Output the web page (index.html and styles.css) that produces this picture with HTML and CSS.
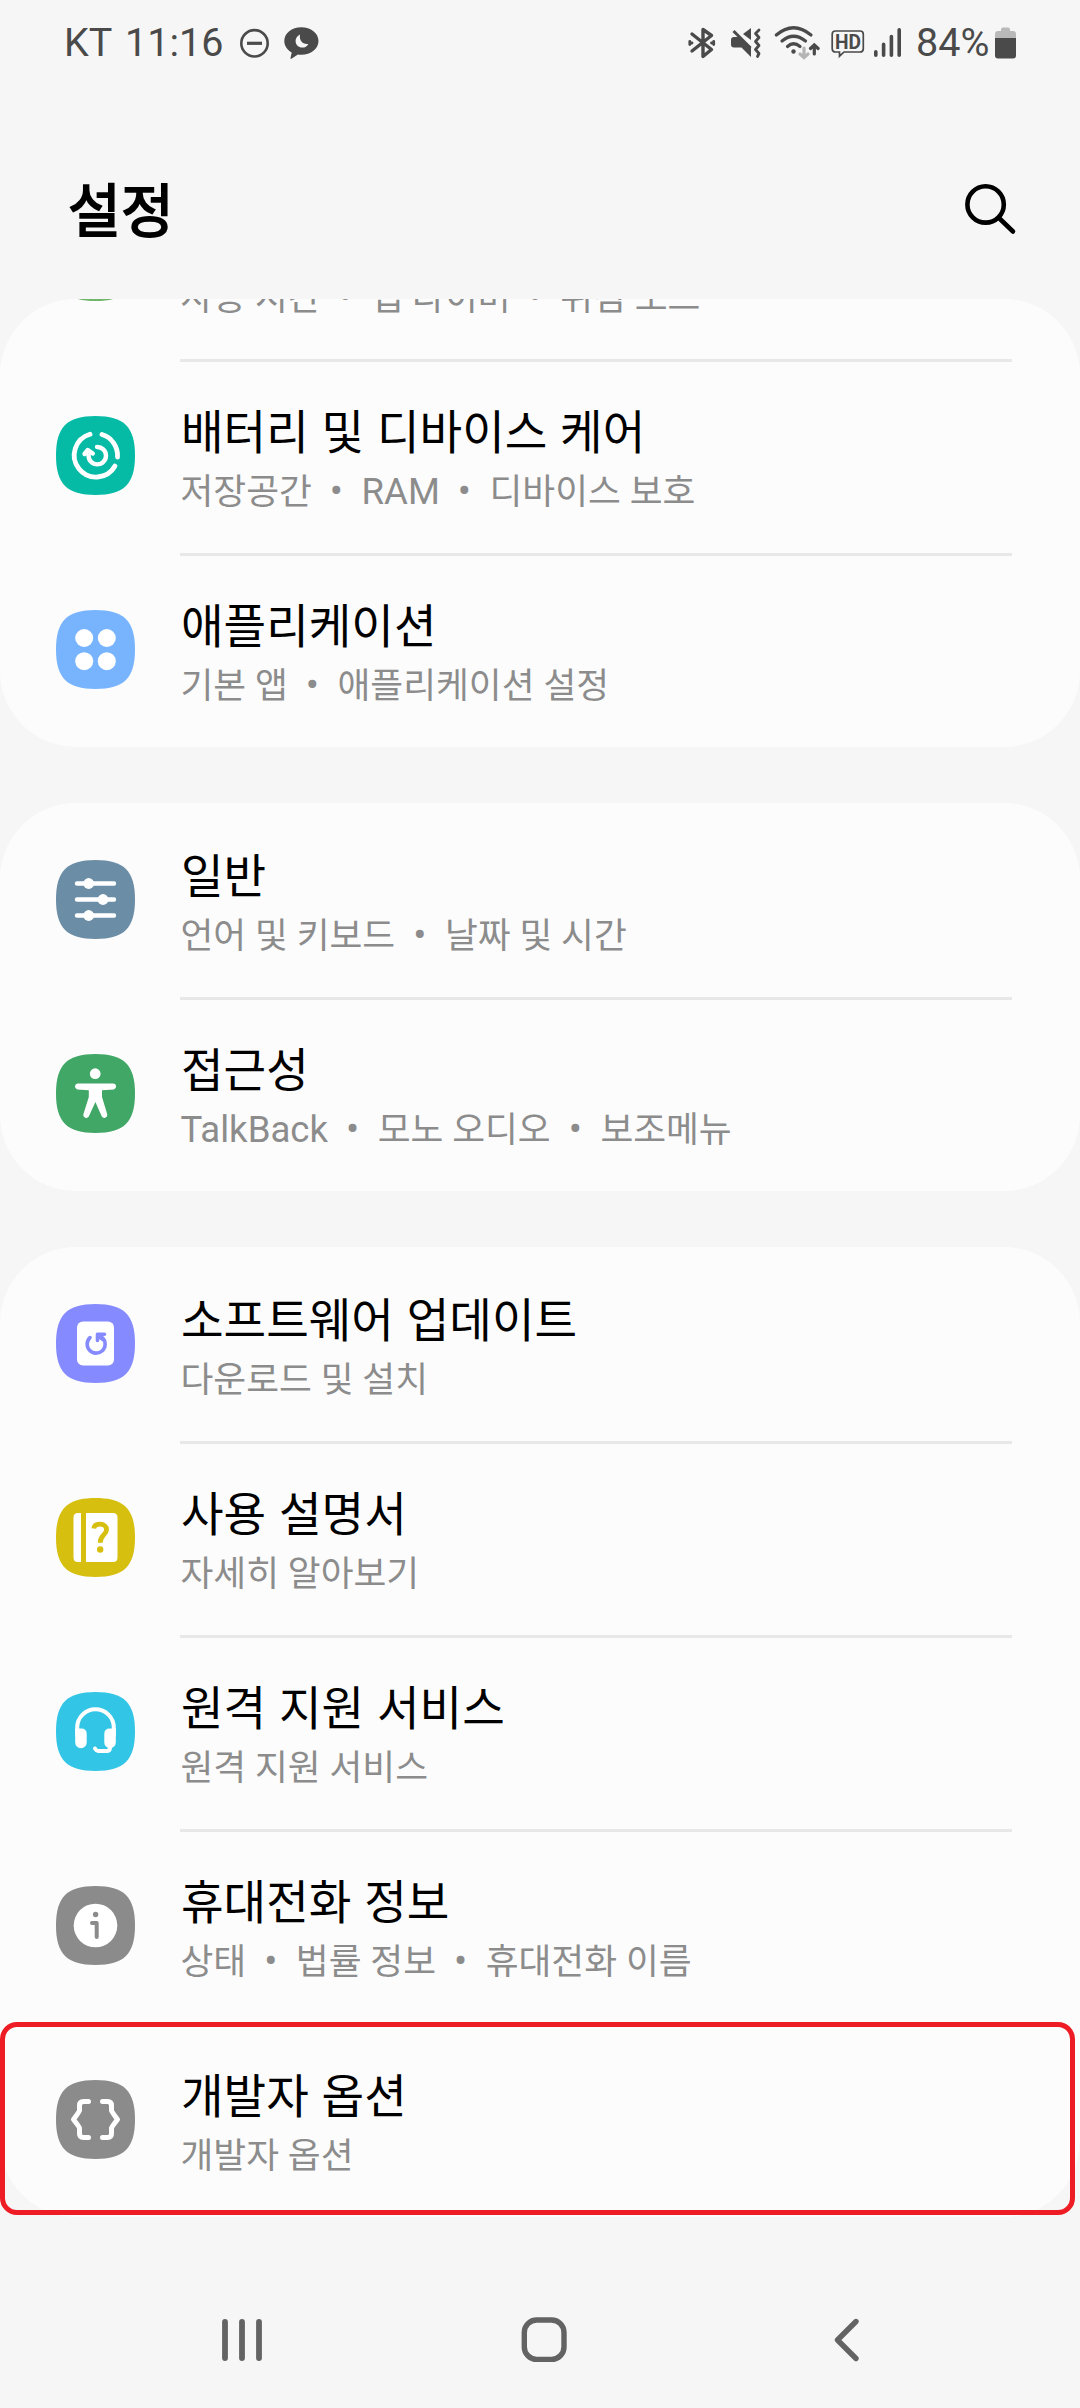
FILE: index.html
```html
<!DOCTYPE html>
<html lang="ko">
<head>
<meta charset="utf-8">
<title>설정</title>
<link rel="stylesheet" href="styles.css">
</head>
<body>
<svg class="defs" width="0" height="0" aria-hidden="true">
  <symbol id="tile" viewBox="0 0 79 79"><path d="M39.5 0C68 0 79 11 79 39.5S68 79 39.5 79 0 68 0 39.5 11 0 39.5 0Z"/></symbol>
</svg>
<div class="phone">
  <header class="status">
    <div class="status-left">
      <span class="carrier">KT</span>
      <span class="clock">11:16</span>
      <svg class="ico-dnd" viewBox="239 0 31 90" width="31" height="90"><circle cx="254.500" cy="43.300" r="13.200" fill="none" stroke="#4a4a4a" stroke-width="2.600"/><path d="M247 43.300h15" stroke="#4a4a4a" stroke-width="3.200"/></svg>
      <svg class="ico-talk" viewBox="284 0 35 90" width="35" height="90"><path d="M301.300 27.300c9.600 0 17.200 6 17.200 13.700s-7.600 13.700-17.200 13.700c-1.200 0-2.300-.1-3.400-.3l-6.500 4.400c-.5.300-1 0-.9-.6l1.200-5.800c-4.500-2.400-7.400-6.600-7.400-11.400 0-7.700 7.500-13.700 17-13.700Z" fill="#4a4a4a"/><path d="M300 34.500c-2.800 1.400-4.400 3.700-4.400 6.500 0 3.900 3 6.600 6.700 6.600 2.700 0 4.900-1.300 6-3.700-5.500.9-9.300-3.400-8.300-9.400Z" fill="#f6f6f6"/></svg>
    </div>
    <div class="status-right">
      <svg viewBox="688 0 29 90" width="29" height="90" fill="none" stroke="#4a4a4a" stroke-width="3.400" stroke-linejoin="round" stroke-linecap="round"><path d="M692 34l19.500 15.500-8.500 7V29.500l8.500 6L692 51"/><path d="M689.800 41.500v3M690.500 43h1.500M713.700 41.500v3M713.500 43h-2" stroke-width="2.800"/></svg>
      <svg class="ico-mute" viewBox="731 0 30 90" width="30" height="90"><path d="M731 40q0-3 3-3h6l11 10v10l-9.500-9.500H734q-3 0-3-3ZM743 34l8-6v12Z" fill="#4a4a4a"/><path d="M733.500 31l17 17" stroke="#4a4a4a" stroke-width="3"/><path d="M759 30l-3.500 3.500 3.500 4-3.500 4 3.500 4-3.500 4 3.500 4-1.500 3" fill="none" stroke="#4a4a4a" stroke-width="2.800" stroke-linejoin="round" stroke-linecap="round"/></svg>
      <svg class="ico-wifi" viewBox="774 0 46 90" width="46" height="90" fill="none" stroke="#4a4a4a" stroke-width="3.200" stroke-linecap="round"><path d="M776.300 35Q793.500 20.500 811 35M782 41Q793.500 31.500 805.500 41M787.500 46.500Q793.500 41 800 46.500"/><circle cx="793.500" cy="51.500" r="2.200" fill="#4a4a4a" stroke="none"/><path d="M804 48v9M800 54l4 3.500 4-3.500" stroke="#b4b4b4"/><path d="M814.300 54v-8M810.500 48.500l3.800-3.500 3.800 3.500"/></svg>
      <svg class="ico-hd" viewBox="831 0 34 90" width="34" height="90"><path d="M835.500 31h24.500q3.300 0 3.300 3.300v14.400q0 3.300-3.300 3.300h-16l-4.500 4.200V52h-4q-3.300 0-3.300-3.300V34.300q0-3.300 3.300-3.300Z" fill="none" stroke="#4a4a4a" stroke-width="1.700"/><text x="848" y="49.300" text-anchor="middle" textLength="26" lengthAdjust="spacingAndGlyphs" class="hd-text">HD</text></svg>
      <svg class="ico-signal" viewBox="873 0 29 90" width="29" height="90" stroke="#4a4a4a" stroke-width="3.600" stroke-linecap="round"><path d="M875.800 51.800v3.400M883.600 44.200v11M891.400 36.500v18.700M899.200 29.800v25.400"/></svg>
      <span class="percent">84%</span>
      <svg class="ico-batt" viewBox="995 0 21 90" width="21" height="90"><path d="M995 38v-4q0-3 3-3h3v-1.500q0-2 2-2h5q2 0 2 2V31h3q3 0 3 3v4Z" fill="#b9b9b9"/><path d="M995 38h21v17.500q0 3-3 3h-15q-3 0-3-3Z" fill="#4a4a4a"/></svg>
    </div>
  </header>

  <div class="titlebar">
    <h1>설정</h1>
    <svg viewBox="960 179 60 60" width="60" height="60" fill="none" stroke="#000" stroke-width="4.600" stroke-linecap="round"><circle cx="985.600" cy="204.400" r="18.200"/><path d="M999 218l14 13.500"/></svg>
  </div>

  <main>
    <section class="card card-scrolled">
      <div class="row">
        <svg class="icon" viewBox="0 0 79 79"><use href="#tile" width="79" height="79" fill="#6fb56a"/></svg>
        <div class="text"><div class="name"></div><div class="sub">사용 시간<i>•</i>앱 타이머<i>•</i>취침 모드</div></div>
      </div>
      <div class="row">
        <svg class="icon" viewBox="0 0 79 79"><use href="#tile" width="79" height="79" fill="#06bba6"/><g fill="none" stroke="#fff" stroke-width="4.800" stroke-linecap="round" stroke-linejoin="round"><path d="M46 18.500A21.800 21.800 0 0 1 61.500 41M59 50A21.800 21.800 0 1 1 34 18.300"/><path d="M41 31A8.700 8.700 0 1 1 32.600 39.500M28.500 38l3.300-4 5 3.500" stroke-width="4.400"/></g></svg>
        <div class="text"><div class="name">배터리 및 디바이스 케어</div><div class="sub">저장공간<i>•</i><span class="latin">RAM</span><i>•</i>디바이스 보호</div></div>
      </div>
      <div class="row">
        <svg class="icon" viewBox="0 0 79 79"><use href="#tile" width="79" height="79" fill="#78b4fd"/><g fill="#fff"><circle cx="28.200" cy="28" r="9"/><circle cx="50.800" cy="28" r="9"/><circle cx="28.200" cy="51.200" r="9"/><circle cx="50.800" cy="51.200" r="9"/></g></svg>
        <div class="text"><div class="name">애플리케이션</div><div class="sub">기본 앱<i>•</i>애플리케이션 설정</div></div>
      </div>
    </section>

    <section class="card">
      <div class="row">
        <svg class="icon" viewBox="0 0 79 79"><use href="#tile" width="79" height="79" fill="#6b8da6"/><path d="M21 23.500h37M21 39.500h37M21 55.500h37" stroke="#fff" stroke-width="4.400" stroke-linecap="round"/><g fill="#fff"><circle cx="32.700" cy="23.500" r="5.400"/><circle cx="47" cy="39.500" r="5.400"/><circle cx="32.700" cy="55.500" r="5.400"/></g></svg>
        <div class="text"><div class="name">일반</div><div class="sub">언어 및 키보드<i>•</i>날짜 및 시간</div></div>
      </div>
      <div class="row">
        <svg class="icon" viewBox="0 0 79 79"><use href="#tile" width="79" height="79" fill="#40a766"/><g fill="#fff"><circle cx="39.200" cy="19.700" r="5.400"/><path d="M21.500 29.500h36a3 3 0 0 1 .3 5.900L46 36.200V43l5.300 17.500a3 3 0 0 1-5.500 2L39.400 48l-6.600 14.500a3 3 0 0 1-5.500-2L32.800 43v-6.800l-11.500-.8a3 3 0 0 1 .2-5.900Z"/></g></svg>
        <div class="text"><div class="name">접근성</div><div class="sub"><span class="latin">TalkBack</span><i>•</i>모노 오디오<i>•</i>보조메뉴</div></div>
      </div>
    </section>

    <section class="card">
      <div class="row">
        <svg class="icon" viewBox="0 0 79 79"><use href="#tile" width="79" height="79" fill="#858bff"/><rect x="21" y="17.500" width="37" height="44" rx="6" fill="#fff"/><path d="M34 33.600A9 9 0 1 0 46.700 34M41.500 36.500V30.200H48.500M42 31.500l5 4" fill="none" stroke="#858bff" stroke-width="3.600" stroke-linecap="round" stroke-linejoin="round"/></svg>
        <div class="text"><div class="name">소프트웨어 업데이트</div><div class="sub">다운로드 및 설치</div></div>
      </div>
      <div class="row">
        <svg class="icon" viewBox="0 0 79 79"><use href="#tile" width="79" height="79" fill="#d6bf0e"/><path d="M22 15h3v49h-3q-4.500 0-4.500-4.500v-40Q17.500 15 22 15ZM30 15h27q4.500 0 4.500 4.500v40q0 4.500-4.500 4.500H30Z" fill="#fff"/><path d="M37.800 30.500c.5-3.200 3-4.300 6.200-4.300 4 0 6.500 2.200 6.500 5.500 0 5-6.300 5.300-6.300 13" fill="none" stroke="#d6bf0e" stroke-width="4.800"/><circle cx="44.200" cy="51.500" r="3.200" fill="#d6bf0e"/></svg>
        <div class="text"><div class="name">사용 설명서</div><div class="sub">자세히 알아보기</div></div>
      </div>
      <div class="row">
        <svg class="icon" viewBox="0 0 79 79"><use href="#tile" width="79" height="79" fill="#33c5e6"/><path d="M21.200 43V35.500a18.300 18.300 0 0 1 36.600 0V43M54 52v3.500q0 3.500-3.500 3.500H42q-1.500 0-3-2.500" fill="none" stroke="#fff" stroke-width="4" stroke-linecap="round"/><path d="M19.200 36.500h6q5.500 0 5.500 5.500v8.500a5.500 5.500 0 0 1-11.500 0ZM59.800 36.500h-6q-5.500 0-5.500 5.500v8.500a5.500 5.500 0 0 0 11.500 0Z" fill="#fff"/></svg>
        <div class="text"><div class="name">원격 지원 서비스</div><div class="sub">원격 지원 서비스</div></div>
      </div>
      <div class="row">
        <svg class="icon" viewBox="0 0 79 79"><use href="#tile" width="79" height="79" fill="#8b8b8b"/><circle cx="39.500" cy="39.500" r="21.800" fill="#fff"/><circle cx="39.600" cy="28.500" r="2.700" fill="#8b8b8b"/><path d="M36 37h4.700v14" fill="none" stroke="#8b8b8b" stroke-width="4" stroke-linecap="round" stroke-linejoin="round"/></svg>
        <div class="text"><div class="name">휴대전화 정보</div><div class="sub">상태<i>•</i>법률 정보<i>•</i>휴대전화 이름</div></div>
      </div>
      <div class="row highlighted">
        <svg class="icon" viewBox="0 0 79 79"><use href="#tile" width="79" height="79" fill="#8b8b8b"/><path d="M32.500 21.500H27.500Q23.500 21.500 23.500 25.500V30.500Q23 32 17.500 39.500 23 46.500 23.500 48V53.500Q23.500 57.500 27.500 57.500H32.500M46.500 21.500h5Q55.500 21.500 55.500 25.500V30.500Q56 32 61.500 39.500 56 46.500 55.500 48V53.500Q55.500 57.500 51.500 57.500H46.500" fill="none" stroke="#fff" stroke-width="5" stroke-linecap="round" stroke-linejoin="round"/></svg>
        <div class="text"><div class="name">개발자 옵션</div><div class="sub">개발자 옵션</div></div>
      </div>
    </section>
  </main>

  <nav class="navbar">
    <svg viewBox="212 2310 60 60" width="60" height="60" stroke="#636363" stroke-width="5.800" stroke-linecap="round"><path d="M225 2322v36M242 2322v36M259 2322v36"/></svg>
    <svg viewBox="514 2310 60 60" width="60" height="60"><rect x="524.300" y="2320" width="39.700" height="39.400" rx="12.500" fill="none" stroke="#636363" stroke-width="5.400"/></svg>
    <svg viewBox="816 2310 60 60" width="60" height="60"><path d="M856 2321.500L837.500 2340l18.500 18.500" fill="none" stroke="#636363" stroke-width="5.400" stroke-linecap="round" stroke-linejoin="round"/></svg>
  </nav>
</div>
</body>
</html>
```
FILE: styles.css
```css
*, *::after { box-sizing: border-box; }
body {
  margin: 0;
  background: #f6f6f6;
  font-family: Roboto, "Noto Sans CJK KR", sans-serif;
  color: #000;
}
svg { display: block; flex: none; }
.defs { position: absolute; }
.phone {
  width: 1080px;
  height: 2408px;
  overflow: hidden;
  display: flex;
  flex-direction: column;
}

/* status bar */
.status {
  height: 90px;
  flex: none;
  display: flex;
  justify-content: space-between;
  padding: 0 64px 0 64px;
  font-size: 39.500px;
  line-height: 86px;
  color: #4a4a4a;
}
.status-left, .status-right { display: flex; white-space: nowrap; }
.carrier { width: 61px; }
.clock { width: 114px; }
.ico-talk { margin-left: 14px; }
.ico-mute { margin-left: 14px; }
.ico-wifi { margin-left: 13px; }
.ico-hd { margin-left: 11px; }
.ico-signal { margin-left: 8px; }
.percent { width: 79px; margin-left: 14px; }
.hd-text { font: 700 20px Roboto, sans-serif; fill: #4a4a4a; }

/* page heading */
.titlebar {
  height: 209px;
  flex: none;
  display: flex;
  justify-content: space-between;
  padding: 89px 60px 0 68px;
}
.titlebar h1 {
  margin: 1px 0 0;
  height: 66px;
  font-size: 57.500px;
  line-height: 66px;
  font-weight: 400;
  -webkit-text-stroke: 1.800px #000;
}

/* settings cards */
main { display: flex; flex-direction: column; gap: 56px; flex: none; }
.card {
  display: flex;
  flex-direction: column;
  background: #fcfcfc;
  border-radius: 76px;
}
.card-scrolled { height: 448px; justify-content: flex-end; overflow: hidden; }
.row {
  height: 194px;
  flex: none;
  display: flex;
  padding: 0 68px 0 56px;
  position: relative;
}
.icon { width: 79px; height: 79px; margin: 57px 45px 0 0; }
.text {
  flex: 1;
  border-top: 3px solid #e8e8e8;
  padding: 44px 0 0;
  white-space: nowrap;
}
.card:not(.card-scrolled) .row:first-child .text,
.row.highlighted .text { border-top-color: transparent; }
.name { height: 54px; font-size: 46.300px; line-height: 54px; word-spacing: 1.300px; padding-left: 1px; }
.sub { height: 44px; margin-top: 10px; font-size: 35.700px; line-height: 44px; color: #8c8c8c; padding-left: .5px; }
.sub i { font-style: normal; margin: 0 18.500px 0 18px; font-size: 39px; line-height: 1px; }
.latin { font-size: 36.600px; line-height: 1px; }

/* red outline around the developer options row */
.highlighted::after {
  content: "";
  position: absolute;
  left: 0;
  top: -1px;
  width: 1075px;
  height: 193px;
  border: 5px solid #ee1c24;
  border-radius: 17px;
}

/* navigation bar */
.navbar {
  margin-top: 93px;
  height: 60px;
  display: flex;
  gap: 242px;
  padding-left: 212px;
}
```
